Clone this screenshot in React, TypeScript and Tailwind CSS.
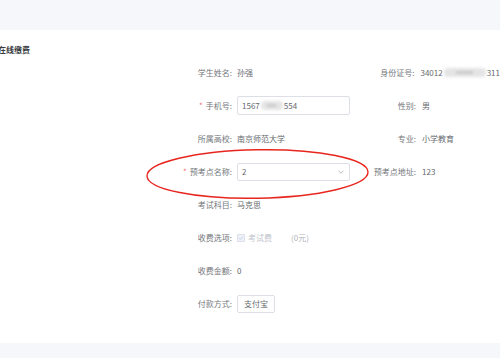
import React from "react";

const font = { fontFamily: '"Noto Sans CJK SC", "Noto Sans", sans-serif' };

function Blur({ w }: { w: number }) {
  return (
    <span className="relative inline-block h-[9px] align-middle mx-[1px]" style={{ width: w }}>
      <span className="absolute inset-0 bg-[#e4e4e4] blur-[1.5px] rounded-sm" />
      <span className="absolute left-[30%] right-[30%] top-[3px] h-[3px] bg-[#cdcdcd] blur-[1px]" />
    </span>
  );
}

function Label({ children, req }: { children: React.ReactNode; req?: boolean }) {
  return (
    <div className="w-[232px] text-right text-[#74777c] shrink-0">
      {req && <span className="text-[#f56c6c] mr-[3px]">*</span>}
      {children}
    </div>
  );
}

function Label2({ children }: { children: React.ReactNode }) {
  return <div className="w-[59px] text-right text-[#74777c] shrink-0">{children}</div>;
}

function Row({ children }: { children: React.ReactNode }) {
  return <div className="flex items-center h-[33px]">{children}</div>;
}

export default function App() {
  return (
    <div className="w-[500px] h-[358px] bg-[#f6f7fb] overflow-hidden text-[8px] leading-[12px]" style={font}>
      <div className="h-[30px]" />
      <div className="relative bg-white pt-[14px] pb-[23px]">
        <div className="h-[12px] ml-[-2px] text-[#3a3c40] font-semibold">在线缴费</div>
        <Row>
          <Label>学生姓名:</Label>
          <div className="ml-[5px] w-[120px] text-[#66696e]">孙强</div>
          <Label2>身份证号:</Label2>
          <div className="ml-[6px] flex items-center whitespace-nowrap text-[#66696e]">
            34012<Blur w={42} />311
          </div>
        </Row>
        <Row>
          <Label req>手机号:</Label>
          <div className="ml-[5px] w-[120px]">
            <div className="w-[113px] h-[19px] border border-[#dcdfe6] rounded-[2px] flex items-center pl-[4px] text-[#66696e]">
              1567<Blur w={22} />554
            </div>
          </div>
          <Label2>性别:</Label2>
          <div className="ml-[6px] text-[#66696e]">男</div>
        </Row>
        <Row>
          <Label>所属高校:</Label>
          <div className="ml-[5px] w-[120px] text-[#66696e]">南京师范大学</div>
          <Label2>专业:</Label2>
          <div className="ml-[6px] text-[#66696e]">小学教育</div>
        </Row>
        <Row>
          <Label req>预考点名称:</Label>
          <div className="ml-[5px] w-[120px]">
            <div className="w-[113px] h-[18px] border border-[#dcdfe6] rounded-[2px] flex items-center justify-between pl-[4px] pr-[5px] text-[#66696e]">
              <span>2</span>
              <svg width="6" height="4" viewBox="0 0 6 4" fill="none">
                <path d="M0.5 0.8 L3 3.2 L5.5 0.8" stroke="#a8abb2" strokeWidth="0.8" />
              </svg>
            </div>
          </div>
          <Label2>预考点地址:</Label2>
          <div className="ml-[6px] text-[#66696e]">123</div>
        </Row>
        <Row>
          <Label>考试科目:</Label>
          <div className="ml-[5px] text-[#66696e]">马克思</div>
        </Row>
        <Row>
          <Label>收费选项:</Label>
          <div className="ml-[5px] flex items-center">
            <span className="w-[8px] h-[8px] border border-[#dcdfe6] bg-[#edf2fc] rounded-[1px] flex items-center justify-center">
              <svg width="6" height="6" viewBox="0 0 6 6" fill="none">
                <path d="M1.2 3.1 L2.5 4.3 L4.8 1.6" stroke="#c0c4cc" strokeWidth="0.8" />
              </svg>
            </span>
            <span className="ml-[3px] text-[#c0c4cc]">考试费</span>
            <span className="ml-[19px] text-[#b0b3b8]">(0元)</span>
          </div>
        </Row>
        <Row>
          <Label>收费金额:</Label>
          <div className="ml-[5px] text-[#66696e]">0</div>
        </Row>
        <Row>
          <Label>付款方式:</Label>
          <div className="ml-[5px]">
            <div className="w-[38px] h-[18px] border border-[#dcdfe6] rounded-[2px] flex items-center justify-center text-[#66696e]">
              支付宝
            </div>
          </div>
        </Row>
        <svg className="absolute left-[145px] top-[118px] pointer-events-none" width="226" height="52" viewBox="0 0 226 52" fill="none">
          <ellipse cx="112.5" cy="26" rx="110.5" ry="24.2" stroke="#e8261e" strokeWidth="1.4" transform="rotate(-1 112.5 26)" />
        </svg>
      </div>
    </div>
  );
}
